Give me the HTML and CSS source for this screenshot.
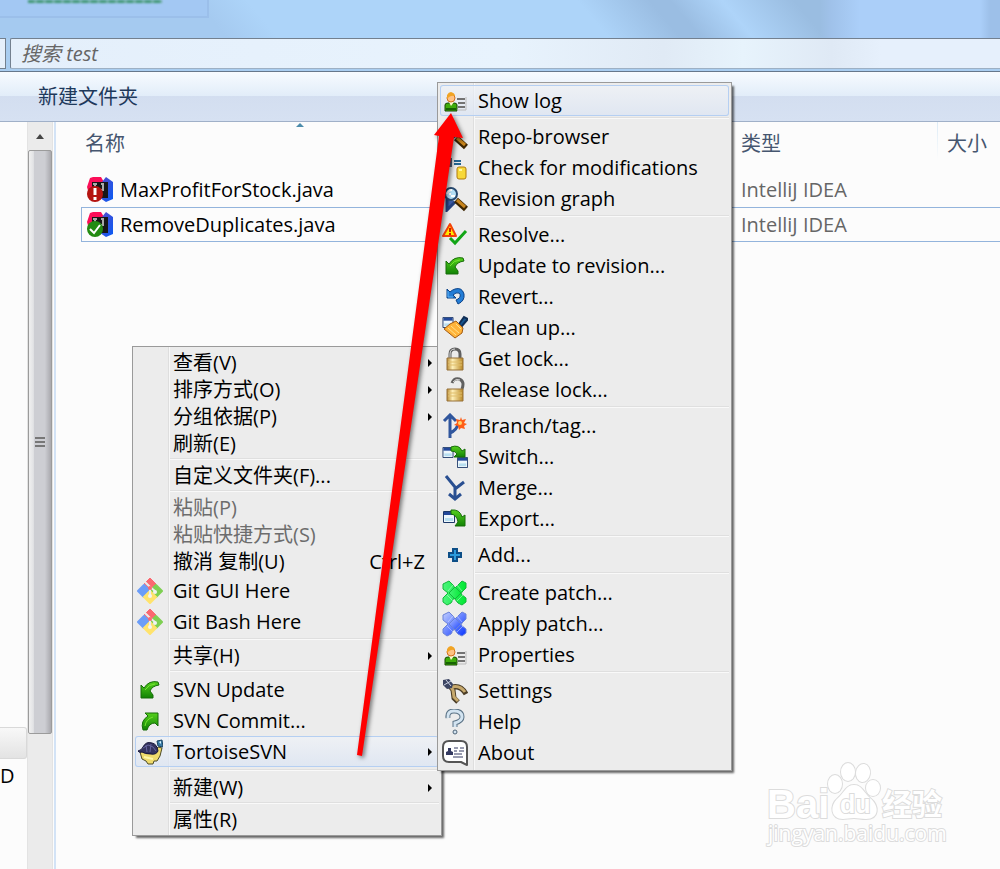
FILE: index.html
```html
<!DOCTYPE html>
<html lang="zh-CN">
<head>
    <meta charset="UTF-8">
    <meta name="viewport" content="width=device-width, initial-scale=1.0">
    <title>test</title>
    <link rel="stylesheet" href="styles.css">
</head>
<body>

<!-- Shared icons -->
<svg class="icon-defs" aria-hidden="true">
    <defs>
        <linearGradient id="gold" x1="0" x2="1"><stop offset="0" stop-color="#b78a35"/><stop offset=".35" stop-color="#fff0b8"/><stop offset="1" stop-color="#b98825"/></linearGradient>
        <linearGradient id="green" x1="0" x2="0" y1="0" y2="1"><stop offset="0" stop-color="#55d01c"/><stop offset="1" stop-color="#118205"/></linearGradient>
        <linearGradient id="ij-blue" x1="0" x2="1" y1="0" y2="1"><stop offset="0" stop-color="#5a48c8"/><stop offset="1" stop-color="#075cf5"/></linearGradient>
        <linearGradient id="patch-green" x1="0" x2="1"><stop offset="0" stop-color="#4cf57c"/><stop offset="1" stop-color="#00e832"/></linearGradient>
        <linearGradient id="patch-blue" x1="0" x2="1" y1="0" y2="1"><stop offset="0" stop-color="#c4d0ff"/><stop offset="1" stop-color="#0633ff"/></linearGradient>
        <symbol id="i-java" viewBox="0 0 26 26">
            <path d="M0 10 3 1l3-1h8l3 5v12H2z" fill="#fb0e58"/>
            <path d="m15 5 4-5 7 5v17l-7 3-6-4z" fill="url(#ij-blue)"/>
            <path d="M5 5h16v16H5z" fill="#171717"/>
            <path d="M6 7h4M8 7v6M6 13h4M14 7h2v6h-3" stroke="#aaa" stroke-width="2" fill="none"/>
        </symbol>
        <symbol id="i-git" viewBox="0 0 26 26">
            <path d="m13 0 6 6-6 6-6-6z" fill="#fb6870" stroke="#fb6870" stroke-linejoin="round"/>
            <path d="m7 7 6 6-6 6-6-6z" fill="#6b9df8" stroke="#6b9df8" stroke-width="2" stroke-linejoin="round"/>
            <path d="m19 7 6 6-6 6-6-6z" fill="#7ed052" stroke="#7ed052" stroke-width="2" stroke-linejoin="round"/>
            <path d="m13 13 6 6-6 6-6-6z" fill="#ffe36d" stroke="#ffe36d" stroke-width="2" stroke-linejoin="round"/>
            <path d="m8 4 5 5v9M13 9l5 4" stroke="#ebebeb" stroke-width="2" fill="none"/>
            <circle cx="13" cy="10" r="2" fill="#fb6870"/>
            <circle cx="13" cy="18" r="2" fill="#f3f3f3"/><circle cx="18" cy="14" r="2" fill="#f3f3f3"/>
        </symbol>
        <symbol id="i-update" viewBox="0 0 26 26">
            <path d="M4 21V8l3 3q5-8 14-6l1 3q-7 1-9 6l3 4v3z" fill="url(#green)" stroke="#176d09"/>
            <path d="M8 13q4-6 10-6" stroke="#77e432" fill="none"/>
        </symbol>
        <symbol id="i-person" viewBox="0 0 26 26">
            <path d="M3 23v-6q0-2 3-2h6q3 0 3 2v6z" fill="#3fac0b" stroke="#154900"/>
            <path d="M4 22h10v-2H4z" fill="#176303"/>
            <path d="m7 14 2 4 3-4z" fill="#fff7cf"/>
            <circle cx="9" cy="10" r="4" fill="#ffc285" stroke="#d3701e"/>
            <path d="M5 11q-1-6 4-7 4 1 4 4-3-1-6 1z" fill="#f1a424"/>
            <path d="M15 11h8M16 15h7M16 19h7" stroke="#737373" stroke-width="2"/>
            <path d="M15 22h9V9" stroke="#bbb" fill="none"/>
        </symbol>
        <symbol id="i-window" viewBox="0 0 12 12">
            <path d="M.5.5h11v11H.5z" fill="#eef7fc" stroke="#1c3868"/>
            <path d="M1 1h10v3H1z" fill="#23489a"/><path d="M2 7h8v3H2z" fill="#b7def0"/>
        </symbol>
        <symbol id="i-lens" viewBox="0 0 26 26">
            <path d="m14 14 10 9" stroke="#3d2500" stroke-width="6"/>
            <path d="m15 14 8 7" stroke="#c7841c" stroke-width="3"/>
            <circle cx="9" cy="8" r="6" fill="#b4dff6" stroke="#28496f" stroke-width="2"/>
            <path d="M5 8q1-4 5-4M9 10h4M7 8h2" stroke="#fff" stroke-width="2" fill="none"/>
        </symbol>
        <symbol id="i-patch" viewBox="0 0 26 26">
            <path d="m7 1 4 4 2 3 3-3 4-4 4 2v5l-4 4-1 2 5 4v4l-4 3-4-2-4-5-3 5-4 2-4-3v-4l5-5-5-4V4z"/>
            <path d="m13 7 6 6-6 6-6-6z" fill-opacity=".6"/>
            <path d="m11 5-5 6M15 5l5 6M5 15l6 6M21 15l-6 6" fill="none" stroke="#fff" stroke-opacity=".4"/>
        </symbol>
    </defs>
</svg>

<header class="glass">
    <div class="glass-tab"><span class="glass-blur"></span></div>
</header>

<div class="address-row">
    <div class="address-end"></div>
    <input class="search" type="text" aria-label="搜索 test" placeholder="搜索 test">
</div>

<div class="toolbar">
    <button type="button">新建文件夹</button>
</div>

<main class="window">
    <nav class="tree">
        <button type="button" class="tree-item selected" aria-label="文件夹"></button>
        <button type="button" class="tree-item">D</button>
    </nav>
    <div class="scrollbar">
        <div class="scroll-up"></div>
        <div class="scroll-thumb"><span></span><span></span><span></span></div>
    </div>
    <section class="files">
        <table>
            <thead>
                <tr>
                    <th class="col-name">名称<span class="sort"></span></th>
                    <th class="col-date"></th>
                    <th class="col-type">类型</th>
                    <th class="col-size">大小</th>
                </tr>
            </thead>
            <tbody>
                <tr>
                    <td><div class="file"><svg><use href="#i-java"/><circle cx="8" cy="17" r="8" fill="#b51410"/><path d="M8 11v7M8 20v3" stroke="#fff" stroke-width="3"/></svg>MaxProfitForStock.java</div></td>
                    <td></td>
                    <td>IntelliJ IDEA</td>
                    <td></td>
                </tr>
                <tr class="focused">
                    <td><div class="file"><svg><use href="#i-java"/><circle cx="8" cy="17" r="8" fill="#238b12"/><path d="m3 17 4 4 6-8" stroke="#fff" stroke-width="2" fill="none"/></svg>RemoveDuplicates.java</div></td>
                    <td></td>
                    <td>IntelliJ IDEA</td>
                    <td></td>
                </tr>
            </tbody>
        </table>
    </section>
</main>

<!-- Watermark -->
<svg class="watermark" viewBox="0 0 190 90" aria-label="Baidu 经验">
    <ellipse cx="69" cy="24" rx="7" ry="9"/>
    <ellipse cx="82" cy="12" rx="7" ry="9"/>
    <ellipse cx="97" cy="13" rx="7" ry="9" transform="rotate(8 97 13)"/>
    <ellipse cx="107" cy="28" rx="7" ry="8"/>
    <path d="M88 25c8 0 10 8 16 13 10 8 9 21-4 21-5 0-8-1-12-1s-8 1-11 1c-12 0-14-13-5-21 6-5 8-13 16-13z"/>
    <text class="mark-bai" x="1" y="58">Bai</text>
    <text class="mark-du" x="74" y="53">du</text>
    <text class="mark-cn" x="116" y="55">经验</text>
    <text class="mark-url" x="2" y="81">jingyan.baidu.com</text>
</svg>

<!-- Folder background menu -->
<div class="menu context-menu" role="menu">
    <button role="menuitem" class="short sub">查看(V)</button>
    <button role="menuitem" class="short sub">排序方式(O)</button>
    <button role="menuitem" class="short sub">分组依据(P)</button>
    <button role="menuitem" class="short">刷新(E)</button>
    <hr>
    <button role="menuitem" class="short">自定义文件夹(F)...</button>
    <hr>
    <button role="menuitem" class="short" disabled>粘贴(P)</button>
    <button role="menuitem" class="short" disabled>粘贴快捷方式(S)</button>
    <button role="menuitem" class="short">撤消 复制(U)<kbd>Ctrl+Z</kbd></button>
    <button role="menuitem"><svg><use href="#i-git"/></svg>Git GUI Here</button>
    <button role="menuitem"><svg><use href="#i-git"/></svg>Git Bash Here</button>
    <hr>
    <button role="menuitem" class="short sub">共享(H)</button>
    <hr>
    <button role="menuitem"><svg><use href="#i-update"/></svg>SVN Update</button>
    <button role="menuitem"><svg viewBox="0 0 26 26"><path d="M8 5h13v13l-3-3q-6 0-8 7H6q-3-9 5-14z" fill="url(#green)" stroke="#176d09"/><path d="M8 18q1-7 8-9" stroke="#77e432" fill="none"/></svg>SVN Commit...</button>
    <button role="menuitem" class="sub active">
        <svg viewBox="0 0 26 26">
            <path d="m3 13 5-1 8 2 5-6 4 1-2 8-3 5h-3l-1 3h-5l-2-3-4-2z" fill="#efdb6c" stroke="#4d4a26"/>
            <path d="M1 12q4-1 5-4 3-6 9-4 5 1 6 8-2 4-7 3-6 0-9-2-3 1-4-1z" fill="#34345f" stroke="#16163a"/>
            <path d="m6 9 5-3 5 2 3 4M9 6l1 7M14 5l-1 8" stroke="#6666a0" fill="none"/>
            <path d="m20 2 5-1 1 7-5-1z" fill="#397aa5" stroke="#1a4564"/><path d="m22 3 2-1v3z" fill="#d8f5ff"/>
            <path d="m7 18 9 2" stroke="#fff8a8" stroke-width="2"/>
        </svg>TortoiseSVN</button>
    <hr class="wide">
    <button role="menuitem" class="short sub">新建(W)</button>
    <hr>
    <button role="menuitem" class="short">属性(R)</button>
</div>

<!-- TortoiseSVN submenu -->
<div class="menu svn-menu" role="menu">
    <button role="menuitem" class="active"><svg><use href="#i-person"/></svg>Show log</button>
    <hr>
    <button role="menuitem"><svg><use href="#i-lens"/></svg>Repo-browser</button>
    <button role="menuitem">
        <svg viewBox="0 0 26 26"><path d="M2 3h8v9H2z" fill="#555f78"/><path d="M12 6h7M12 9h7" stroke="#246590" stroke-width="2"/><rect x="15" y="12" width="9" height="12" rx="2" fill="#f7d83a" stroke="#b07b0b"/><path d="M17 15h3" stroke="#fff7a0" stroke-width="2"/></svg>Check for modifications</button>
    <button role="menuitem"><svg viewBox="0 0 26 26"><path d="M5 10v14l8-8" fill="#3d5aa5" stroke="#24417f" stroke-width="3"/><use href="#i-lens"/></svg>Revision graph</button>
    <hr>
    <button role="menuitem">
        <svg viewBox="0 0 26 26"><path d="m8 16 5 5L24 9" fill="none" stroke="#12a516" stroke-width="3"/><path d="m8 2 6 12H1z" fill="#ffea00" stroke="#f44108" stroke-width="2" stroke-linejoin="round"/><path d="M8 6v4M8 11v2" stroke="#d51605" stroke-width="2"/></svg>Resolve...</button>
    <button role="menuitem"><svg><use href="#i-update"/></svg>Update to revision...</button>
    <button role="menuitem">
        <svg viewBox="0 0 26 26"><path d="M5 5v9h9l-3-3q3-3 6-2 3 3-1 6l-2 1 2 4q7-3 6-10-2-7-9-5-3 1-5 3z" fill="#237dd6" stroke="#0b4288"/><path d="M6 7v6h5" fill="none" stroke="#62b5f4"/></svg>Revert...</button>
    <button role="menuitem">
        <svg viewBox="0 0 26 26"><use href="#i-window" x="0" y="2" width="12" height="11"/><path d="m17 9 5-7 4 2-7 8z" fill="#17558f" stroke="#102e55" stroke-width="2"/><path d="m14 6 7 7-1 5-7 5L2 14l6-5z" fill="#ffb33a" stroke="#a35b13"/><path d="m14 9 5 5M6 13l8 7M9 11l8 7" stroke="#ffe18a"/></svg>Clean up...</button>
    <button role="menuitem">
        <svg viewBox="0 0 26 26"><path d="M8 13V8q0-5 5-5t5 5v5" fill="none" stroke="#606060" stroke-width="3"/><path d="M8 12V8q0-5 5-5" fill="none" stroke="#ddd"/><path d="M5 12h16v12H5z" fill="url(#gold)" stroke="#967139"/><path d="M6 16h14M6 19h14" stroke="#e1bf6c"/></svg>Get lock...</button>
    <button role="menuitem">
        <svg viewBox="0 0 26 26"><path d="M10 6q2-5 7-4 6 2 3 10" fill="none" stroke="#606060" stroke-width="3"/><path d="M11 5q3-4 7-2" fill="none" stroke="#ddd"/><path d="M5 12h16v12H5z" fill="url(#gold)" stroke="#967139"/><path d="M6 16h14M6 19h14" stroke="#e1bf6c"/></svg>Release lock...</button>
    <hr>
    <button role="menuitem">
        <svg viewBox="0 0 26 26"><path d="M8 25V3M2 8l6-6 6 6M8 20q7-3 8-9" fill="none" stroke="#30569d" stroke-width="3"/><path d="m19 4 1 3 4-1-2 4 3 1-3 2 1 3-4-1-2 2-1-4-4-1 3-2-1-4 4 1z" fill="#ff5d16"/><circle cx="18" cy="10" r="2" fill="#ffd36b"/></svg>Branch/tag...</button>
    <button role="menuitem">
        <svg viewBox="0 0 26 26"><use href="#i-window" x="0" y="3" width="12" height="11"/><use href="#i-window" x="15" y="13" width="11" height="11"/><path d="M9 3q8-3 11 4l3-2v8H12l3-3q-1-3-6-3z" fill="url(#green)" stroke="#176d09"/></svg>Switch...</button>
    <button role="menuitem">
        <svg viewBox="0 0 26 26"><path d="m4 1 9 11v11M22 7l-9 7M7 19l6 5 6-5" fill="none" stroke="#294f91" stroke-width="3"/></svg>Merge...</button>
    <button role="menuitem">
        <svg viewBox="0 0 26 26"><use href="#i-window" x="1" y="5" width="12" height="12"/><path d="M9 4q9-1 11 7l3-2v11H13l3-4q-1-7-7-8z" fill="url(#green)" stroke="#176d09"/></svg>Export...</button>
    <hr>
    <button role="menuitem">
        <svg viewBox="0 0 26 26"><path d="M11 7h4v4h4v4h-4v4h-4v-4H7v-4h4z" fill="#2b9bdc" stroke="#0c4e87" stroke-width="2"/></svg>Add...</button>
    <hr class="wide">
    <button role="menuitem"><svg fill="url(#patch-green)" stroke="#12b83a"><use href="#i-patch"/></svg>Create patch...</button>
    <button role="menuitem"><svg fill="url(#patch-blue)" stroke="#6a82d8"><use href="#i-patch"/></svg>Apply patch...</button>
    <button role="menuitem"><svg><use href="#i-person"/></svg>Properties</button>
    <hr>
    <button role="menuitem">
        <svg viewBox="0 0 26 26"><path d="m7 7 4 5 1 8 4 4M10 9q9-2 14 7" fill="none" stroke="#4b3d26" stroke-width="5"/><path d="m8 8 3 4 1 7 4 4M10 9q8-2 13 5" fill="none" stroke="#c6a86c" stroke-width="3"/><path d="m1 2 6-1 4 5-1 4-5 1-4-4z" fill="#3c4563"/><path d="m2 7 7-4M4 2l5 6" stroke="#cbd1e2"/></svg>Settings</button>
    <button role="menuitem">
        <svg viewBox="0 0 26 26"><path d="M6 9q-1-7 6-7 8 0 8 6 0 4-7 6v4" fill="none" stroke="#5b7386" stroke-width="5"/><path d="M6 9q-1-7 6-7 8 0 8 6 0 4-7 6v4" fill="none" stroke="#d3e4f1" stroke-width="3"/><circle cx="13" cy="23" r="2" fill="#d3e4f1" stroke="#4d6477"/></svg>Help</button>
    <button role="menuitem">
        <svg viewBox="0 0 26 26"><path d="M7 1h12q6 0 6 6v18l-6-3H7q-6 0-6-6V7q0-6 6-6z" fill="#fff" stroke="#555" stroke-width="2" stroke-linejoin="round"/><path d="M4 15v-3l2-1V8h3v3l2 1v3z" fill="#333960"/><path d="M12 8h4M18 8h4M12 11h3M17 11h5M12 14h8M11 17h10" stroke="#333960" stroke-width="1"/></svg>About</button>
</div>

<!-- Red pointer arrow -->
<svg class="pointer" viewBox="0 0 120 660" aria-hidden="true">
    <path d="m101 4 12 25-9-1L12 647l-5-1L89 27l-5-1z" fill="red"/>
</svg>

</body>
</html>
```
FILE: styles.css
```css
* {
    box-sizing: border-box;
}
body {
    position: relative;
    display: flex;
    flex-direction: column;
    min-height: 100vh;
    margin: 0;
    overflow: hidden;
    background: #fcfcfc;
    color: #000;
    font-family: "Open Sans", "Noto Sans CJK SC", sans-serif;
    font-size: 20px;
    line-height: 26px;
}
button {
    border: none;
    padding: 0;
    background: none;
    color: inherit;
    font: inherit;
    text-align: left;
}
.icon-defs {
    position: absolute;
    width: 0;
    height: 0;
}

/* Window frame */
.glass {
    height: 38px;
    background: linear-gradient(90deg, rgba(171, 207, 249, 0) 82%, #9fc1e9 83%, #abcff9 86%, #abcff9 98%, #9dc0e9 99%),
        linear-gradient(50deg, #a5caf0 0%, #a5caf0 22%, #add4f9 27%, #add4f9 59%, #9abde2 66%, #9abde2 68%, #aed4f9 73%, #9abde1 80%);
}
.glass-tab {
    width: 209px;
    height: 18px;
    border-right: 2px solid #9bbfea;
    border-bottom: 2px solid #9bbfea;
    background: #a3c8f3;
    overflow: hidden;
}
.glass-blur {
    display: block;
    width: 134px;
    height: 3px;
    margin-left: 28px;
    background: repeating-linear-gradient(90deg, #3f9672 0, #3f9672 6px, #6aac9c 6px, #6aac9c 9px);
    filter: blur(1px);
}
.address-row {
    display: flex;
    gap: 4px;
    height: 33px;
    padding-bottom: 2px;
    background: #a9cdf0;
}
.address-end {
    width: 6px;
    border: 1px solid #73808f;
    border-left: none;
    background: #e6f0fb;
}
.search {
    flex: 1;
    min-width: 0;
    border: 1px solid #73808f;
    border-right: none;
    border-bottom-color: #9db0c4;
    border-radius: 2px 0 0 2px;
    padding: 0 10px;
    background: linear-gradient(90deg, #e4effb, #e8f3fd 50%, #e0eaf5 66%, #e7f3fc 74%, #dfe9f5 83%, #e6f0fc 88%);
    font: inherit;
    font-style: italic;
}
.search::placeholder {
    color: #666;
    opacity: 1;
}
.toolbar {
    height: 51px;
    border-top: 1px solid #66788c;
    border-bottom: 1px solid #a0b0c8;
    padding: 12px 38px;
    background: linear-gradient(#f7fbff, #e2edf9 48%, #d3def0 48%, #d6e1f2);
    color: #1e395b;
}

/* Panes */
.window {
    display: flex;
    flex: 1;
}
.tree {
    display: flex;
    flex-direction: column;
    gap: 4px;
    width: 27px;
    padding-top: 605px;
}
.tree-item {
    height: 26px;
}
.tree-item.selected {
    height: 32px;
    border: 1px solid #d9d9d9;
    border-left: none;
    border-radius: 0 3px 3px 0;
    background: linear-gradient(#f8f8f8, #e3e3e3);
}
.scrollbar {
    display: flex;
    flex-direction: column;
    width: 26px;
    border-right: 1px solid #e3e3e3;
    border-left: 1px solid #e3e3e3;
    background: #ebebeb;
}
.scroll-up {
    height: 28px;
}
.scroll-up::before {
    content: "";
    display: block;
    width: 0;
    margin: 12px auto;
    border: 4px solid transparent;
    border-top: none;
    border-bottom: 5px solid #444;
}
.scroll-thumb {
    display: flex;
    flex-direction: column;
    align-items: center;
    justify-content: center;
    gap: 2px;
    height: 584px;
    border: 1px solid #9b9b9b;
    border-radius: 2px;
    background: linear-gradient(90deg, #f0f0f0, #e2e3e5 20%, #cdced3 24%, #cdced3 72%, #a9a9ae);
}
.scroll-thumb span {
    width: 10px;
    height: 2px;
    background: #777;
}
.files {
    flex: 1;
    min-width: 0;
    margin-left: 1px;
    border-left: 2px solid #d3e3f6;
    padding-left: 25px;
}

/* File list */
table {
    width: calc(100% + 2px);
    table-layout: fixed;
    border-collapse: collapse;
}
th {
    position: relative;
    height: 50px;
    padding: 9px 4px 0;
    color: #46566f;
    font-weight: 400;
    text-align: left;
    vertical-align: top;
}
td {
    height: 35px;
    padding: 0 4px;
    color: #666;
}
.col-name {
    width: 439px;
}
.col-date {
    width: 217px;
}
.col-type {
    width: 200px;
}
.col-size {
    padding-left: 10px;
    background: linear-gradient(#dcebf6, #fcfcfc) left top / 1px 38px no-repeat;
}
.sort {
    position: absolute;
    top: 1px;
    left: 49%;
    border: 4px solid transparent;
    border-top: none;
    border-bottom: 4px solid #4c8cab;
}
.file {
    display: flex;
    align-items: center;
    gap: 7px;
    padding-left: 2px;
    color: #000;
}
.file svg {
    width: 26px;
    height: 26px;
}
.focused {
    outline: 1px solid #93b4dc;
    outline-offset: -1px;
}

/* Menus */
.menu {
    position: absolute;
    display: flex;
    flex-direction: column;
    border: 1px solid #9a9a9a;
    padding: 2px;
    background: linear-gradient(90deg, #ececec 35px, #dedede 35px, #dedede 36px, #f8f8f8 36px, #f8f8f8 37px, #ececec 37px);
    box-shadow: 3px 3px 2px -1px rgba(0, 0, 0, 0.6);
}
.menu button {
    position: relative;
    display: flex;
    align-items: center;
    gap: 10px;
    height: 31px;
    padding-left: 2px;
    white-space: nowrap;
}
.menu button.short {
    height: 27px;
    padding-left: 38px;
}
.menu button:disabled {
    color: #6d6d6d;
}
.menu svg {
    flex: none;
    width: 26px;
    height: 26px;
}
.menu hr {
    width: calc(100% - 35px);
    height: 2px;
    margin: 1px 0 2px auto;
    border: none;
    border-top: 1px solid #dfdfdf;
    border-bottom: 1px solid #f9f9f9;
}
.menu hr.wide {
    margin: 2px 0 3px auto;
}
.menu button.active {
    border-radius: 3px;
    background: linear-gradient(rgba(240, 244, 250, 0.6), rgba(218, 228, 244, 0.7));
    box-shadow: inset 0 0 0 1px #b5cff2;
}
.menu .sub::after {
    content: "";
    position: absolute;
    right: 7px;
    border: 4px solid transparent;
    border-right: none;
    border-left: 4px solid #000;
}
.menu kbd {
    margin-right: 14px;
    margin-left: auto;
    font: inherit;
}
.context-menu {
    top: 346px;
    left: 132px;
    width: 310px;
}
.svn-menu {
    top: 82px;
    left: 437px;
    width: 295px;
}

/* Overlays */
.pointer {
    position: absolute;
    top: 109px;
    left: 350px;
    width: 120px;
    height: 660px;
    filter: drop-shadow(2px 2px 2px rgba(0, 0, 0, 0.5));
    pointer-events: none;
}
.watermark {
    position: absolute;
    right: 44px;
    bottom: 19px;
    width: 190px;
    height: 90px;
    overflow: visible;
    fill: #fff;
    stroke: #dcdcdc;
    stroke-width: 2px;
    paint-order: stroke;
}
.mark-bai {
    font: bold 40px "Liberation Sans", sans-serif;
}
.mark-du {
    font: bold 25px "Liberation Sans", sans-serif;
}
.mark-cn {
    font: bold 30px "Noto Sans CJK SC", sans-serif;
}
.mark-url {
    font-size: 21px;
}
```
